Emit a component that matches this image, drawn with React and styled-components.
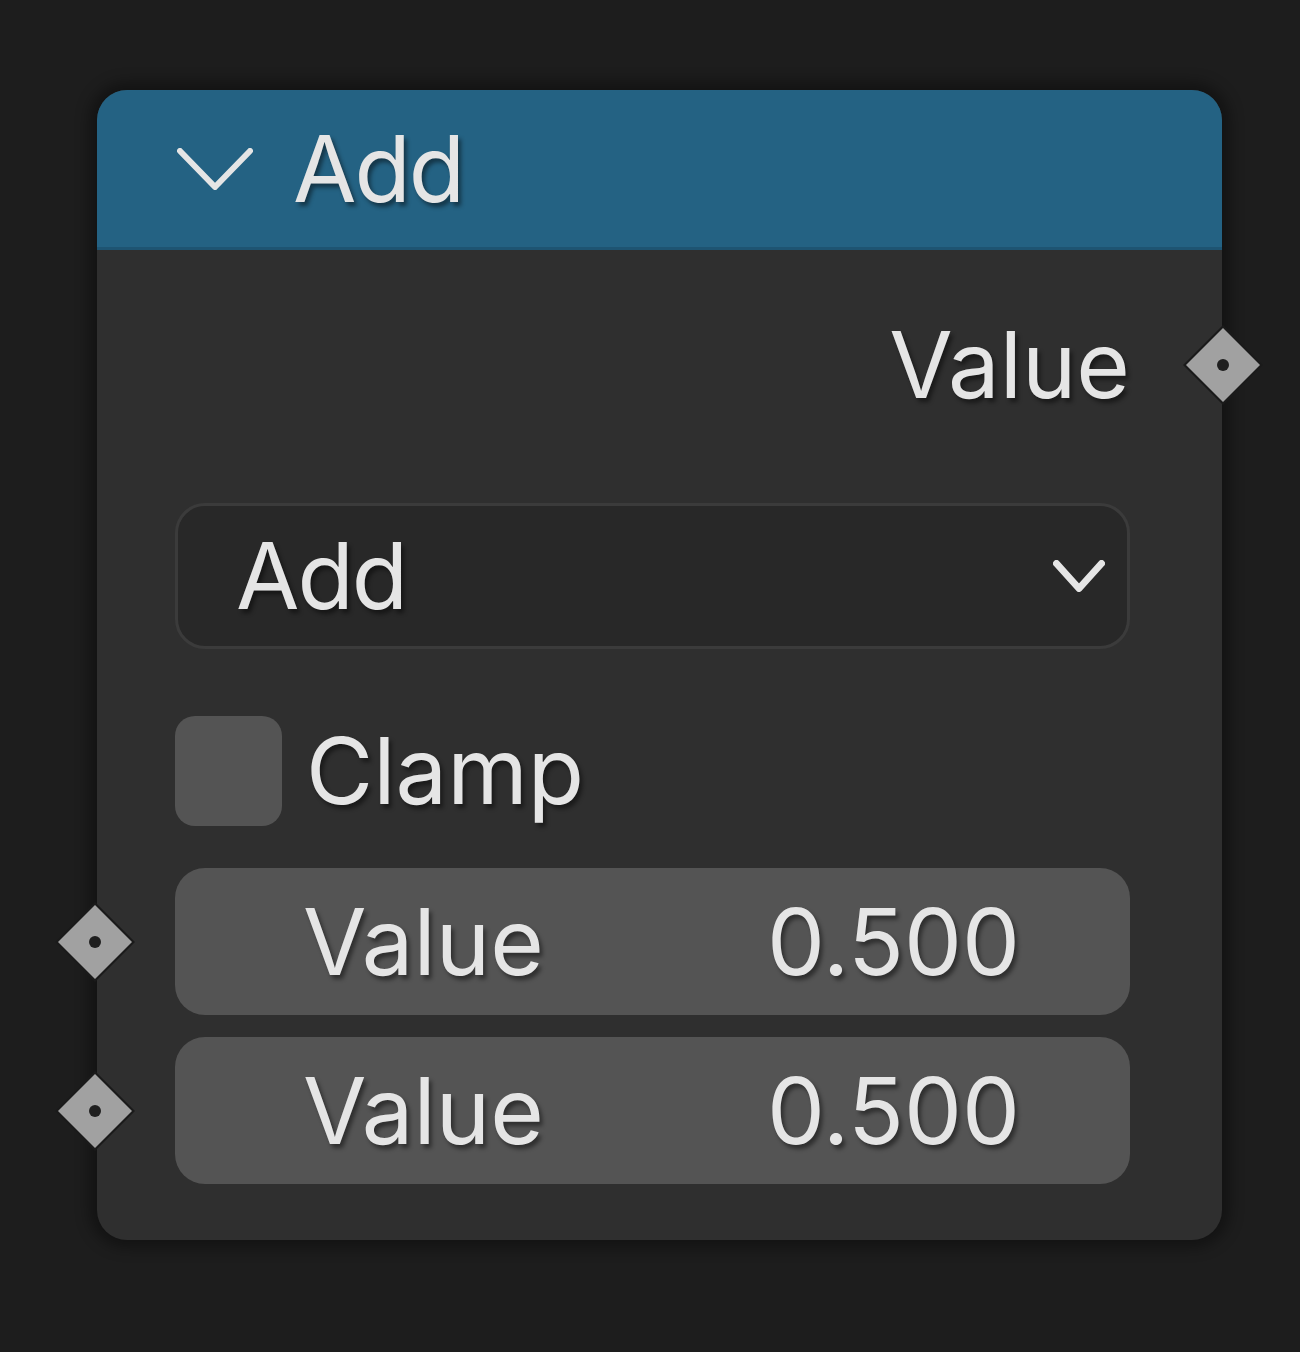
import React from 'react'
import styled, { createGlobalStyle } from 'styled-components'

const GlobalStyle = createGlobalStyle`
  html, body {
    margin: 0;
    padding: 0;
    background: #1d1d1d;
  }
  body {
    font-family: Inter, "Noto Sans", "DejaVu Sans", sans-serif;
    color: #e5e5e5;
  }
`

const Canvas = styled.div`
  width: 1300px;
  height: 1352px;
  padding: 90px 0 0 97px;
  box-sizing: border-box;
`

const Node = styled.div`
  width: 1125px;
  height: 1150px;
  border-radius: 30px;
  background: #2f2f2f;
  box-shadow: 0 0 14px 8px rgba(0, 0, 0, 0.35);
  display: flex;
  flex-direction: column;
`

const Header = styled.div`
  height: 157px;
  flex: none;
  background: #246283;
  border-radius: 30px 30px 0 0;
  border-bottom: 3px solid #1e5472;
  display: flex;
  align-items: center;
  padding-left: 80px;
  gap: 40px;
`

const Body = styled.div`
  position: relative;
  flex: 1;
  display: flex;
  flex-direction: column;
  padding: 50px 92px 55px 78px;
`

const Row = styled.div`
  position: relative;
  display: flex;
  align-items: center;
  height: ${p => p.$h}px;
  margin-top: ${p => p.$mt || 0}px;
  justify-content: ${p => (p.$right ? 'flex-end' : 'flex-start')};
`

const Label = styled.span`
  font-size: 92px;
  line-height: 1;
  letter-spacing: ${p => p.$tight ? '-2px' : '0'};
  text-shadow: 3px 4px 4px rgba(0, 0, 0, 0.45);
  white-space: nowrap;
`

const Select = styled.div`
  height: 146px;
  width: 100%;
  box-sizing: border-box;
  border: 3px solid #3b3b3b;
  border-radius: 30px;
  background: #282828;
  display: flex;
  align-items: center;
  justify-content: space-between;
  padding: 0 22px 0 58px;
  margin-right: -3px;
`

const Checkbox = styled.div`
  width: 107px;
  height: 110px;
  border-radius: 20px;
  background: #545454;
  margin-right: 24px;
  flex: none;
`

const Field = styled.div`
  height: 147px;
  width: 100%;
  border-radius: 30px;
  background: #545454;
  display: flex;
  align-items: center;
  justify-content: space-between;
  padding: 0 110px 0 128px;
  box-sizing: border-box;
`

const Socket = styled.svg`
  position: absolute;
  top: 50%;
  width: 84px;
  height: 84px;
  margin-top: -42px;
  ${p => (p.$side === 'right' ? 'right: -135px;' : 'left: -122px;')}
`

function SocketIcon({ side }) {
  return (
    <Socket $side={side} viewBox="0 0 84 84">
      <polygon points="42,2 82,42 42,82 2,42" fill="#1a1a1a" />
      <polygon points="42,5 79,42 42,79 5,42" fill="#a1a1a1" />
      <circle cx="42" cy="42" r="6" fill="#1f1f1f" />
    </Socket>
  )
}

function Chevron({ w, h, stroke }) {
  return (
    <svg width={w} height={h} viewBox={`0 0 ${w} ${h}`} style={{ flex: 'none' }}>
      <polyline
        points={`${stroke / 2},${stroke / 2} ${w / 2},${h - stroke / 2} ${w - stroke / 2},${stroke / 2}`}
        fill="none"
        stroke="#e5e5e5"
        strokeWidth={stroke}
        strokeLinecap="round"
        strokeLinejoin="round"
      />
    </svg>
  )
}

export default function App() {
  return (
    <>
      <GlobalStyle />
      <Canvas>
        <Node>
          <Header>
            <Chevron w={76} h={42} stroke={6} />
            <Label $tight>Add</Label>
          </Header>
          <Body>
            <Row $h={130} $right>
              <Label>Value</Label>
              <SocketIcon side="right" />
            </Row>
            <Row $h={152} $mt={70}>
              <Select>
                <Label $tight>Add</Label>
                <Chevron w={52} h={32} stroke={7} />
              </Select>
            </Row>
            <Row $h={110} $mt={64}>
              <Checkbox />
              <Label>Clamp</Label>
            </Row>
            <Row $h={147} $mt={42}>
              <SocketIcon side="left" />
              <Field>
                <Label>Value</Label>
                <Label>0.500</Label>
              </Field>
            </Row>
            <Row $h={147} $mt={22}>
              <SocketIcon side="left" />
              <Field>
                <Label>Value</Label>
                <Label>0.500</Label>
              </Field>
            </Row>
          </Body>
        </Node>
      </Canvas>
    </>
  )
}
